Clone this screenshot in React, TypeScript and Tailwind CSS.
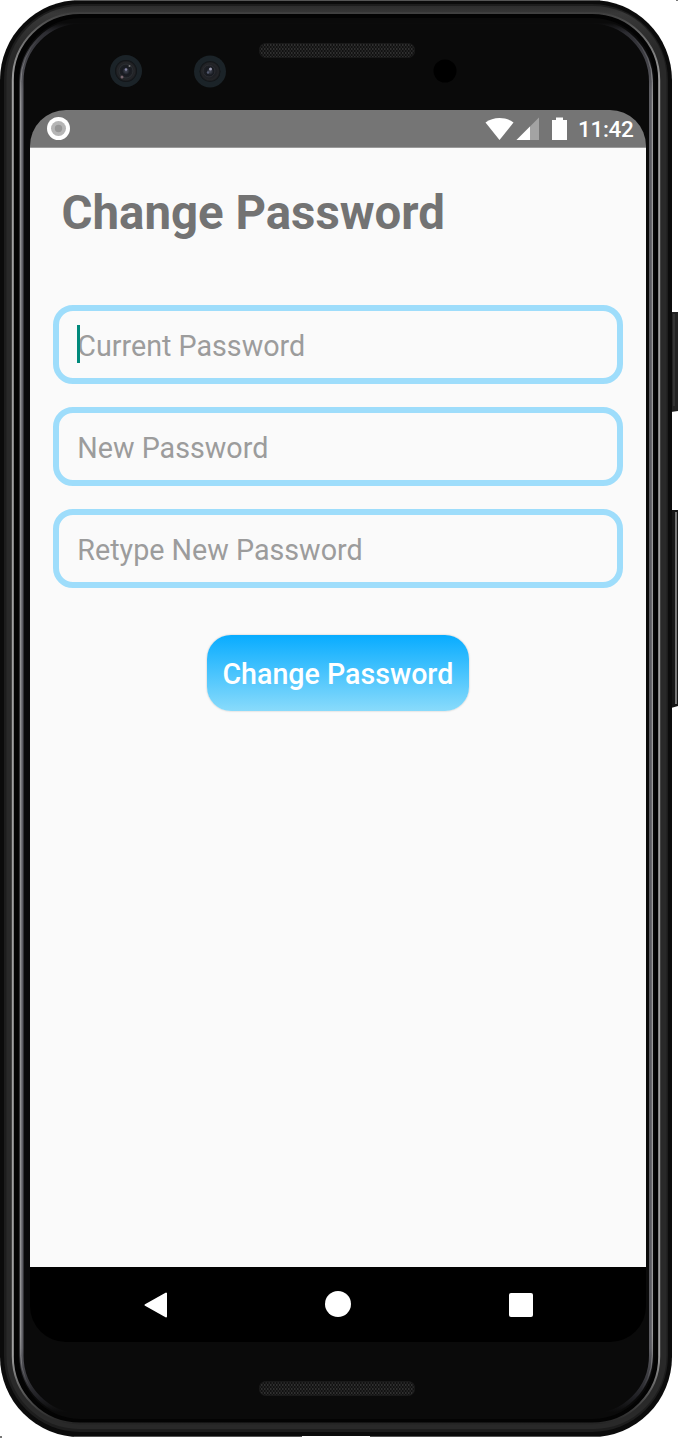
import React from "react";

function PhoneFrame() {
  return (
    <svg className="absolute inset-0" width="680" height="1438" viewBox="0 0 680 1438" aria-hidden="true">
      <defs>
        <linearGradient id="rim" gradientUnits="userSpaceOnUse" x1="0" y1="12" x2="0" y2="1425">
          <stop offset="0" stopColor="#3d3d3d" />
          <stop offset="0.015" stopColor="#666" />
          <stop offset="0.05" stopColor="#a0a0a0" />
          <stop offset="0.95" stopColor="#a0a0a0" />
          <stop offset="0.985" stopColor="#444" />
          <stop offset="1" stopColor="#222" />
        </linearGradient>
        <linearGradient id="inner" gradientUnits="userSpaceOnUse" x1="0" y1="20" x2="0" y2="1418">
          <stop offset="0.002" stopColor="#0a0a0a" />
          <stop offset="0.009" stopColor="#2c2c31" />
          <stop offset="0.05" stopColor="#5c5c62" />
          <stop offset="0.95" stopColor="#5c5c62" />
          <stop offset="0.985" stopColor="#202024" />
          <stop offset="0.996" stopColor="#0a0a0a" />
        </linearGradient>
        <linearGradient id="glint" gradientUnits="userSpaceOnUse" x1="0" y1="20" x2="0" y2="1418">
          <stop offset="0.01" stopColor="#999" stopOpacity="0" />
          <stop offset="0.06" stopColor="#aaa" />
          <stop offset="0.94" stopColor="#aaa" />
          <stop offset="0.98" stopColor="#999" stopOpacity="0" />
        </linearGradient>
        <linearGradient id="band" gradientUnits="userSpaceOnUse" x1="0" y1="5" x2="0" y2="1432">
          <stop offset="0" stopColor="#2b2b2b" />
          <stop offset="0.006" stopColor="#383838" />
          <stop offset="0.03" stopColor="#292929" />
          <stop offset="1" stopColor="#292929" />
        </linearGradient>
        <pattern id="mesh" width="3" height="4" patternUnits="userSpaceOnUse">
          <rect width="3" height="4" fill="#111" />
          <rect width="1.500" height="2" fill="#303030" />
          <rect x="1.500" y="2" width="1.500" height="2" fill="#252525" />
        </pattern>
        <radialGradient id="lens">
          <stop offset="0" stopColor="#454956" />
          <stop offset="0.35" stopColor="#171a20" />
          <stop offset="0.8" stopColor="#242528" />
          <stop offset="1" stopColor="#0e1114" />
        </radialGradient>
      </defs>
      <path d="M670 312h8v99l-7 1z" fill="#222" />
      <path d="M673 314h2v92h-2z" fill="#333" />
      <path d="M670 510h8v196l-7 2z" fill="#151515" />
      <path d="M675 512h2v192h-2z" fill="#777" />
      <rect x="0" y="0" width="672" height="1437" rx="80" fill="#0b0b0b" />
      <path d="M74 .5H600M74 1436.5H600" stroke="#555" />
      <path d="M302 1436h68v2h-68z" fill="#fff" />
      <rect x="4" y="4" width="664" height="1428" rx="76" fill="#1d1d1d" />
      <rect x="6.5" y="6" width="660" height="1423" rx="73" fill="url(#band)" />
      <rect x="12.8" y="13" width="646.4" height="1410.5" rx="67" fill="#030303" stroke="url(#rim)" strokeWidth="2" />
      <rect x="18.5" y="18" width="636" height="1401" rx="62" fill="#0a0a0a" />
      <rect x="21.5" y="21.5" width="629.5" height="1394" rx="60" fill="#0a0a0a" stroke="url(#inner)" strokeWidth="4" />
      <rect x="20.8" y="20.5" width="631.5" height="1396" rx="61" fill="none" stroke="url(#glint)" strokeWidth="1" />
      <rect x="259.5" y="43.5" width="155" height="14" rx="6" fill="url(#mesh)" stroke="#191919" />
      <rect x="259.5" y="1381.5" width="155" height="14" rx="6" fill="url(#mesh)" stroke="#191919" />
      <circle cx="445" cy="71" r="11.5" fill="#000" />
      <g>
        <circle cx="126" cy="71" r="16" fill="#1b2328" />
        <circle cx="126" cy="71" r="11" fill="url(#lens)" />
        <circle cx="126" cy="71" r="7" fill="none" stroke="#2c3034" />
        <circle cx="126" cy="69.500" r="1.300" fill="#8585a5" />
        <circle cx="122" cy="77" r="1.500" fill="#78656d" />
        <circle cx="129.500" cy="66" r="1" fill="#777" />
      </g>
      <g>
        <circle cx="210" cy="71.500" r="16" fill="#1b2328" />
        <circle cx="210" cy="71.500" r="10.500" fill="url(#lens)" />
        <circle cx="209" cy="71" r="6" fill="none" stroke="#2c2d32" />
        <circle cx="210.500" cy="69" r="1.500" fill="#9a9ab0" />
        <circle cx="208" cy="72.500" r="1.200" fill="#555b70" />
      </g>
      <path d="M676 0h2v1h-2zM0 1436h2v2h-2z" fill="#777" />
    </svg>
  );
}

function StatusBar() {
  return (
    <header className="flex h-[38px] shrink-0 items-center border-b border-[#9b9b9b] bg-[#757575] pl-[17px] pr-[12px]">
      <svg width="23" height="23" viewBox="0 0 23 23">
        <circle cx="11.500" cy="11.500" r="11.500" fill="#fff" />
        <circle cx="11.500" cy="11.500" r="7.500" fill="#b5b5b5" />
        <circle cx="11.500" cy="11.500" r="3.700" fill="#969696" />
      </svg>
      <svg className="ml-auto" width="82" height="24" viewBox="0 0 82 24">
        <path d="M.5 5.500C8-.5 21-.5 28.500 5.500L14.500 23z" fill="#fff" />
        <path d="M54 .5V23H31.500z" fill="#a3a3a3" />
        <path d="M45 9.500V23H31.500z" fill="#fff" />
        <path d="M71 .5h7V3h4v20H67V3h4z" fill="#fff" />
      </svg>
      <span className="ml-[11px] w-[56px] whitespace-nowrap pt-[2px] text-[22.5px] font-medium leading-none tracking-[-0.3px] text-white">11:42</span>
    </header>
  );
}

function Field({ label, focused = false }: { label: string; focused?: boolean }) {
  return (
    <div className="relative flex h-[79px] items-center rounded-[20px] border-[6px] border-[#9eddfb] pl-[18px]">
      <span className="whitespace-nowrap pt-[2px] text-[28.7px] leading-[34px] text-[#9c9c9c]">{label}</span>
      {focused && <span className="absolute left-[18px] top-[14px] h-[38px] w-[3px] bg-[#00897b]" />}
    </div>
  );
}

export default function App() {
  return (
    <div className="relative h-[1438px] w-[680px] overflow-hidden bg-white pl-[30px] pt-[110px] font-['Roboto',sans-serif]">
      <PhoneFrame />
      <div className="relative flex h-[1232px] w-[616px] flex-col overflow-hidden rounded-[36px]">
        <StatusBar />
        <main className="flex flex-1 flex-col bg-[#fafafa] pl-[23.3px] pr-[23.5px]">
          <h1 className="mt-[37px] whitespace-nowrap pl-[8.2px] text-[47.4px] font-bold leading-[56px] text-[#737373]">Change Password</h1>
          <form className="mt-[64px] flex flex-col gap-[23px]">
            <Field label="Current Password" focused />
            <Field label="New Password" />
            <Field label="Retype New Password" />
            <button
              type="button"
              className="mt-[24px] h-[76px] w-[262px] self-center whitespace-nowrap rounded-[24px] bg-linear-to-b/srgb from-[#08acff] to-[#89dbfb] pt-[3px] text-[28.6px] font-medium text-white shadow-[0_0_2px_rgba(0,0,0,0.25)]"
            >
              Change Password
            </button>
          </form>
        </main>
        <nav className="flex h-[75px] shrink-0 items-center justify-between bg-black pl-[114px] pr-[113px]">
          <svg width="24" height="26" viewBox="0 0 24 26">
            <path d="M1.500 13L22 1.500v23z" fill="#fff" stroke="#fff" strokeWidth="2" strokeLinejoin="round" />
          </svg>
          <span className="-ml-[2px] size-[26px] -translate-y-px rounded-full bg-white" />
          <span className="size-[24px] rounded-[2px] bg-white" />
        </nav>
      </div>
    </div>
  );
}
